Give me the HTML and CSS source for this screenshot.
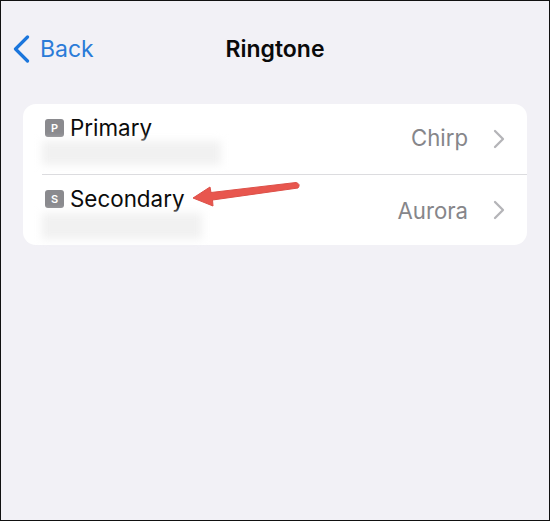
FILE: index.html
```html
<!DOCTYPE html>
<html>
	<head>
		<meta charset="utf-8">
		<title>Ringtone</title>
		<link rel="stylesheet" href="styles.css">
	</head>
	<body>
		<div class="screen">
			<div class="nav">
				<a class="back" href="#">
					<svg class="back-icon" width="18" height="28" viewBox="0 0 18 28"><path d="M14.500 2 2.500 14 14.500 26" fill="none" stroke="#1b76dc" stroke-width="3.200" stroke-linecap="round" stroke-linejoin="round"/></svg>
					<span>Back</span>
				</a>
				<h1>Ringtone</h1>
			</div>
			<div class="card">
				<div class="row row-first">
					<div class="line">
						<div class="info">
							<div class="label"><span class="badge">P</span>Primary</div>
							<div class="blur blur-first"></div>
						</div>
						<span class="value value-first">Chirp</span>
						<svg class="chevron" width="12" height="20" viewBox="0 0 12 20"><path d="M2 2l8 8-8 8" fill="none" stroke="#b4b4b8" stroke-width="2.300" stroke-linecap="round" stroke-linejoin="round"/></svg>
					</div>
				</div>
				<div class="row row-second">
					<div class="line">
						<div class="info">
							<div class="label"><span class="badge">S</span>Secondary</div>
							<div class="blur blur-second"></div>
						</div>
						<span class="value value-second">Aurora</span>
						<svg class="chevron" width="12" height="20" viewBox="0 0 12 20"><path d="M2 2l8 8-8 8" fill="none" stroke="#b4b4b8" stroke-width="2.300" stroke-linecap="round" stroke-linejoin="round"/></svg>
					</div>
				</div>
			</div>
			<!-- annotation arrow -->
			<svg class="arrow" width="112" height="28" viewBox="0 0 112 28"><path d="M106 2.500 21 12.500 20 7 3 18 23 26 22.500 20 108 8Q111 4 106 2.500Z" fill="#e8564e" stroke="#dc5048" stroke-width="1" stroke-linejoin="round"/></svg>
		</div>
	</body>
</html>
```

FILE: styles.css
```css
*{margin:0;padding:0;box-sizing:border-box;}
body{width:550px;height:521px;font-family:"Inter","Liberation Sans",sans-serif;overflow:hidden;}
a{text-decoration:none;}
.screen{position:relative;width:550px;height:521px;background:#f2f1f6;border:1px solid #111;padding:0 22px;}
.nav{position:relative;height:103px;display:flex;justify-content:center;padding-top:33px;}
.nav h1{font-size:23px;font-weight:600;line-height:30px;color:#0a0a0a;}
.back{position:absolute;left:-10px;top:33px;display:flex;align-items:center;gap:9px;color:#2a7bd8;font-size:23px;line-height:30px;}
.card{background:#fff;border-radius:13px;height:141px;}
.row{height:70px;padding-left:19px;}
.row-first{height:71px;}
.row-first .line{border-bottom:1px solid #dcdcdf;}
.line{height:100%;display:flex;align-items:center;padding-right:22px;}
.info{flex:1;padding-top:11px;height:100%;}
.label{display:flex;align-items:center;gap:6px;font-size:22.400px;line-height:26px;color:#0a0a0a;margin-left:3px;}
.badge{width:19px;height:18px;background:#8a8a8e;border-radius:3px;color:#fff;font-size:11px;font-weight:600;line-height:18px;text-align:center;}
.blur{height:24px;background:#f1f1f1;filter:blur(4px);}
.blur-first{width:179px;}
.blur-second{width:160px;height:26px;margin-top:1px;}
.value{font-size:22.200px;color:#86868a;line-height:30px;margin-right:25px;}
.value-first{margin-top:-3px;}
.value-second{margin-top:1px;}
.chevron{margin-top:0;}
.row-second .chevron{margin-top:-1px;}
.arrow{position:absolute;left:189px;top:179px;}
```
